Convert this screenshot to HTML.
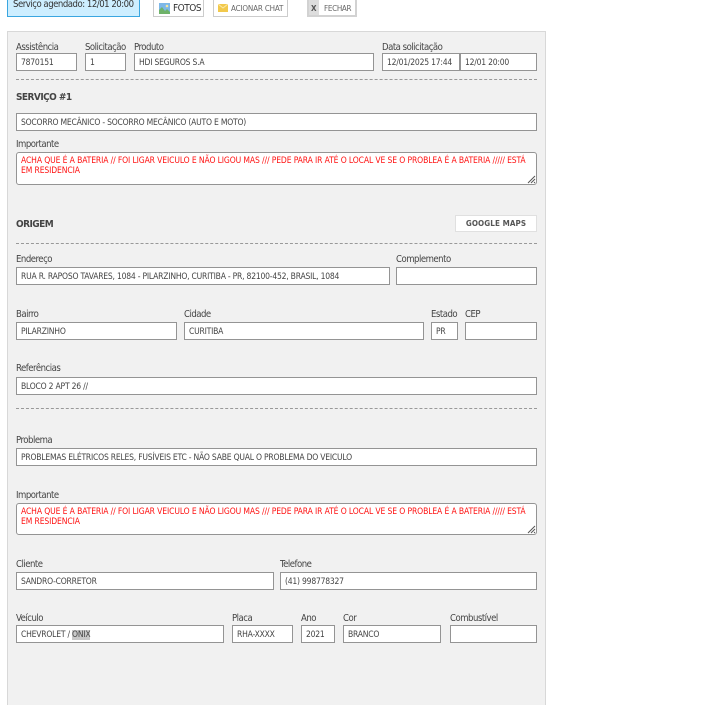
<!DOCTYPE html>
<html><head><meta charset="utf-8">
<style>
html,body{margin:0;padding:0;background:#fff;width:703px;height:705px;overflow:hidden}
body{position:relative;font-family:"DejaVu Sans Condensed","DejaVu Sans","Liberation Sans",sans-serif;font-stretch:condensed;color:#444}
div,span{position:absolute;box-sizing:border-box;white-space:nowrap}
.l{font-size:9.5px;letter-spacing:-.5px;line-height:12px;color:#444;margin-top:1px}
.i{height:18px;background:#fff;border:1px solid #949494;font-size:8.5px;letter-spacing:-.22px;line-height:18px;padding-left:4px;color:#444}
.d{left:16px;width:521px;height:0;border-top:1px dashed #999}
.h{font-size:10px;letter-spacing:-.55px;font-weight:bold;color:#444;line-height:12px;left:16px;margin-top:1px}
.t{left:16px;width:521px;background:#fff;border:1px solid #949494;border-radius:3px;font-size:8.5px;letter-spacing:-.12px;line-height:10px;color:#f11;padding:3px 4px;white-space:nowrap}
.b{background:#fff;border:1px solid #ccc;color:#555}
</style></head><body>
<div style="left:7px;top:-4px;width:133px;height:21px;background:#cdeeff;border:1px solid #3aa6e0"></div>
<div style="left:13px;top:-1px;font-size:9.5px;letter-spacing:-.48px;line-height:12px;color:#333">Serviço agendado: 12/01 20:00</div>

<div class="b" style="left:153px;top:-3px;width:51px;height:20px;border:1px solid #ccc"></div>
<svg style="position:absolute;left:159px;top:3px" width="11" height="11" viewBox="0 0 11 11"><rect width="11" height="11" fill="#7db8e8"/><path d="M0 11V7l3-3 3 4 2-2 3 3v2z" fill="#6fb36a"/><circle cx="8" cy="3" r="1.3" fill="#f4e7a0"/></svg>
<div style="left:173px;top:3px;font-size:10px;letter-spacing:-.5px;line-height:12px;color:#333">FOTOS</div>

<div class="b" style="left:213px;top:-3px;width:75px;height:20px"></div>
<svg style="position:absolute;left:218px;top:4px" width="10" height="8" viewBox="0 0 10 8"><rect width="10" height="8" fill="#f2c94c"/><path d="M0 0l5 4 5-4" fill="none" stroke="#fbe9a8"/></svg>
<div style="left:231px;top:3px;font-size:8px;letter-spacing:-.17px;line-height:11px;color:#666">ACIONAR CHAT</div>

<div style="left:307px;top:-3px;width:50px;height:20px;background:#fff;border:2px solid #d2d2d2"></div>
<div style="left:309px;top:-1px;width:10px;height:16px;background:#ddd"></div>
<div style="left:311px;top:3px;font-size:8px;line-height:11px;font-weight:bold;color:#555">X</div>
<div style="left:324px;top:3px;font-size:8px;letter-spacing:-.3px;line-height:11px;color:#666">FECHAR</div>

<div style="left:7px;top:31px;width:539px;height:690px;background:#f1f1f1;border:1px solid #d8d8d8"></div>

<div class="l" style="left:16px;top:41px">Assistência</div>
<div class="l" style="left:85px;top:41px">Solicitação</div>
<div class="l" style="left:134px;top:41px">Produto</div>
<div class="l" style="left:382px;top:41px">Data solicitação</div>
<div class="i" style="left:16px;top:53px;width:61px">7870151</div>
<div class="i" style="left:85px;top:53px;width:41px">1</div>
<div class="i" style="left:134px;top:53px;width:240px">HDI SEGUROS S.A</div>
<div class="i" style="left:382px;top:53px;width:78px">12/01/2025 17:44</div>
<div class="i" style="left:460px;top:53px;width:77px">12/01 20:00</div>
<div class="d" style="top:79px"></div>

<div class="h" style="top:91px">SERVIÇO #1</div>
<div class="i" style="left:16px;top:113px;width:521px">SOCORRO MECÂNICO - SOCORRO MECÂNICO (AUTO E MOTO)</div>
<div class="l" style="left:16px;top:138px">Importante</div>
<div class="t" style="top:152px;height:33px">ACHA QUE É A BATERIA // FOI LIGAR VEICULO E NÃO LIGOU MAS /// PEDE PARA IR ATÉ O LOCAL VE SE O PROBLEA É A BATERIA ///// ESTÁ<br>EM RESIDENCIA</div>
<svg style="position:absolute;left:527px;top:175px" width="9" height="9" viewBox="0 0 9 9"><path d="M1 8l7-7M4 8l4-4M7 8l1-1" stroke="#555" stroke-width="1"/></svg>

<div class="h" style="top:218px">ORIGEM</div>
<div style="left:455px;top:215px;width:82px;height:17px;background:#fff;border:1px solid #e0e0e0;font-size:8px;font-weight:bold;line-height:15px;text-align:center;color:#555;letter-spacing:.1px">GOOGLE MAPS</div>
<div class="d" style="top:243px"></div>

<div class="l" style="left:16px;top:253px">Endereço</div>
<div class="l" style="left:396px;top:253px">Complemento</div>
<div class="i" style="left:16px;top:267px;width:374px">RUA R. RAPOSO TAVARES, 1084 - PILARZINHO, CURITIBA - PR, 82100-452, BRASIL, 1084</div>
<div class="i" style="left:396px;top:267px;width:141px"></div>

<div class="l" style="left:16px;top:308px">Bairro</div>
<div class="l" style="left:184px;top:308px">Cidade</div>
<div class="l" style="left:431px;top:308px">Estado</div>
<div class="l" style="left:465px;top:308px">CEP</div>
<div class="i" style="left:16px;top:322px;width:161px">PILARZINHO</div>
<div class="i" style="left:184px;top:322px;width:240px">CURITIBA</div>
<div class="i" style="left:431px;top:322px;width:27px">PR</div>
<div class="i" style="left:465px;top:322px;width:72px"></div>

<div class="l" style="left:16px;top:362px">Referências</div>
<div class="i" style="left:16px;top:377px;width:521px">BLOCO 2 APT 26 //</div>
<div class="d" style="top:408px"></div>

<div class="l" style="left:16px;top:434px">Problema</div>
<div class="i" style="left:16px;top:448px;width:521px">PROBLEMAS ELÉTRICOS RELES, FUSÍVEIS ETC - NÃO SABE QUAL O PROBLEMA DO VEICULO</div>

<div class="l" style="left:16px;top:489px">Importante</div>
<div class="t" style="top:503px;height:32px">ACHA QUE É A BATERIA // FOI LIGAR VEICULO E NÃO LIGOU MAS /// PEDE PARA IR ATÉ O LOCAL VE SE O PROBLEA É A BATERIA ///// ESTÁ<br>EM RESIDENCIA</div>
<svg style="position:absolute;left:527px;top:525px" width="9" height="9" viewBox="0 0 9 9"><path d="M1 8l7-7M4 8l4-4M7 8l1-1" stroke="#555" stroke-width="1"/></svg>

<div class="l" style="left:16px;top:558px">Cliente</div>
<div class="l" style="left:280px;top:558px">Telefone</div>
<div class="i" style="left:16px;top:572px;width:258px">SANDRO-CORRETOR</div>
<div class="i" style="left:280px;top:572px;width:257px">(41) 998778327</div>

<div class="l" style="left:16px;top:612px">Veículo</div>
<div class="l" style="left:232px;top:612px">Placa</div>
<div class="l" style="left:301px;top:612px">Ano</div>
<div class="l" style="left:343px;top:612px">Cor</div>
<div class="l" style="left:450px;top:612px">Combustível</div>
<div class="i" style="left:16px;top:625px;width:208px">CHEVROLET / <b style="font-weight:normal;background:#c8c8c8">ONIX</b></div>
<div class="i" style="left:232px;top:625px;width:61px">RHA-XXXX</div>
<div class="i" style="left:301px;top:625px;width:34px">2021</div>
<div class="i" style="left:343px;top:625px;width:98px">BRANCO</div>
<div class="i" style="left:450px;top:625px;width:87px"></div>
</body></html>
